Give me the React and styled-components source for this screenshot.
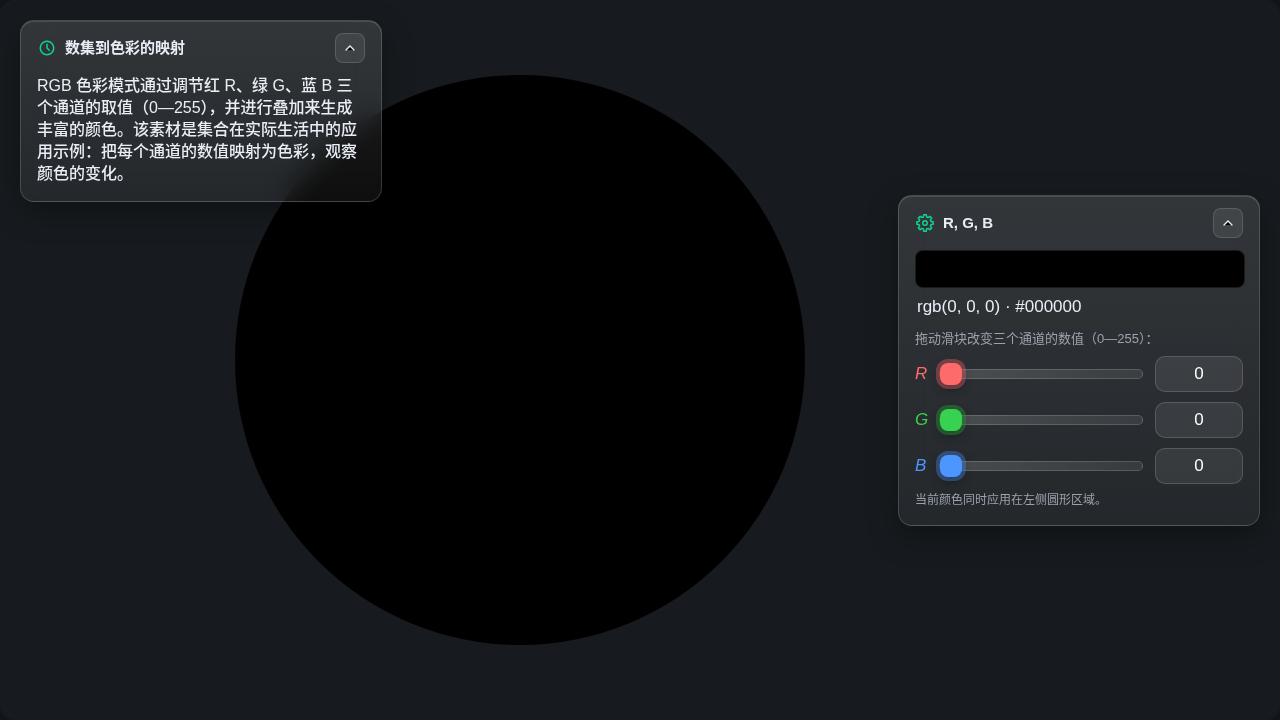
import { useState } from 'react';
import styled, { createGlobalStyle } from 'styled-components';

const channels = [
  { key: 'r', label: 'R', color: '#ff6b6b', ring: 'rgba(255, 107, 107, 0.35)' },
  { key: 'g', label: 'G', color: '#37d24f', ring: 'rgba(40, 160, 60, 0.4)' },
  { key: 'b', label: 'B', color: '#4d96ff', ring: 'rgba(77, 150, 255, 0.35)' },
];

function toHex(value) {
  return value.toString(16).padStart(2, '0').toUpperCase();
}

// outline of a cog with eight teeth in a 24x24 box
function cogPath() {
  const points = [];
  for (let i = 0; i < 8; i++) {
    [[-15, 8.3], [-9, 11], [9, 11], [15, 8.3]].forEach(([offset, radius]) => {
      const angle = ((i * 45 + offset) * Math.PI) / 180;
      const x = 12 + radius * Math.sin(angle);
      const y = 12 - radius * Math.cos(angle);
      points.push(`${x.toFixed(2)} ${y.toFixed(2)}`);
    });
  }
  return `M${points.join('L')}Z`;
}

function Collapse({ open, onClick }) {
  return (
    <IconButton type="button" aria-label="折叠" aria-expanded={open} onClick={onClick}>
      <Chevron viewBox="0 0 24 24" $open={open}>
        <path d="M6 15l6-6 6 6" />
      </Chevron>
    </IconButton>
  );
}

function App() {
  const [rgb, setRgb] = useState({ r: 0, g: 0, b: 0 });
  const [infoOpen, setInfoOpen] = useState(true);
  const [controlsOpen, setControlsOpen] = useState(true);

  const css = `rgb(${rgb.r}, ${rgb.g}, ${rgb.b})`;
  const hex = `#${toHex(rgb.r)}${toHex(rgb.g)}${toHex(rgb.b)}`;

  const change = (key) => (e) => {
    const value = Math.max(0, Math.min(255, Number(e.target.value) || 0));
    setRgb({ ...rgb, [key]: value });
  };

  return (
    <Stage>
      <GlobalStyle />
      <Canvas>
        <Disc style={{ background: css }} />
      </Canvas>

      <InfoPanel>
        <Header>
          <HeaderIcon>
            <LineIcon viewBox="0 0 24 24">
              <circle cx="12" cy="12" r="9" />
              <path d="M12 7v5l3 3" />
            </LineIcon>
          </HeaderIcon>
          <Title>数集到色彩的映射</Title>
          <Collapse open={infoOpen} onClick={() => setInfoOpen(!infoOpen)} />
        </Header>
        {infoOpen && (
          <Description>
            RGB 色彩模式通过调节红 R、绿 G、蓝 B 三个通道的取值（0—255），并进行叠加来生成丰富的颜色。该素材是集合在实际生活中的应用示例：把每个通道的数值映射为色彩，观察颜色的变化。
          </Description>
        )}
      </InfoPanel>

      <ControlPanel>
        <Header>
          <HeaderIcon>
            <LineIcon viewBox="0 0 24 24">
              <circle cx="12" cy="12" r="3" />
              <path d={cogPath()} />
            </LineIcon>
          </HeaderIcon>
          <Title>R, G, B</Title>
          <Collapse open={controlsOpen} onClick={() => setControlsOpen(!controlsOpen)} />
        </Header>
        {controlsOpen && (
          <>
            <Swatch style={{ background: css }} />
            <Readout>{css} · {hex}</Readout>
            <Hint>拖动滑块改变三个通道的数值（0—255）：</Hint>
            <Rows>
              {channels.map((c) => (
                <Row key={c.key}>
                  <ChannelLabel htmlFor={`range-${c.key}`} $color={c.color}>{c.label}</ChannelLabel>
                  <Slider
                    id={`range-${c.key}`}
                    type="range"
                    min="0"
                    max="255"
                    value={rgb[c.key]}
                    onChange={change(c.key)}
                    $color={c.color}
                    $ring={c.ring}
                  />
                  <NumberBox
                    type="number"
                    min="0"
                    max="255"
                    aria-label={c.label}
                    value={rgb[c.key]}
                    onChange={change(c.key)}
                  />
                </Row>
              ))}
            </Rows>
            <Note>当前颜色同时应用在左侧圆形区域。</Note>
          </>
        )}
      </ControlPanel>
    </Stage>
  );
}

export default App;

const GlobalStyle = createGlobalStyle`
  * {
    box-sizing: border-box;
  }
  body {
    margin: 0;
    background: #111418;
    color: #e9eef6;
    font-family: "Liberation Sans", "Noto Sans CJK SC", sans-serif;
    font-size: 16px;
    font-weight: 500;
  }
  input, button {
    font-family: inherit;
  }
`;

const Stage = styled.main`
  display: grid;
  grid-template-columns: minmax(0, 1fr);
  min-height: 100vh;
  border-radius: 14px;
  background: #171b1f;
  overflow: hidden;
`;

const Canvas = styled.div`
  grid-area: 1 / 1;
  display: flex;
  align-items: center;
  justify-content: center;
  padding-right: 240px;
`;

const Disc = styled.div`
  height: calc(100vh - 150px);
  aspect-ratio: 1;
  border-radius: 50%;
`;

const Panel = styled.section`
  grid-area: 1 / 1;
  width: 362px;
  margin: 20px;
  padding: 12px 16px 16px;
  border: 1px solid rgba(255, 255, 255, 0.16);
  border-radius: 14px;
  background: linear-gradient(180deg, rgba(255, 255, 255, 0.12), rgba(255, 255, 255, 0.06));
  backdrop-filter: blur(14px);
  box-shadow: 0 10px 30px rgba(0, 0, 0, 0.35), inset 0 1px 0 rgba(255, 255, 255, 0.12);
`;

const InfoPanel = styled(Panel)`
  place-self: start;
`;

const ControlPanel = styled(Panel)`
  place-self: center end;
`;

const Header = styled.header`
  display: flex;
  align-items: center;
  gap: 8px;
  height: 30px;
  margin-bottom: 12px;
`;

const HeaderIcon = styled.span`
  display: flex;
  align-items: center;
  justify-content: center;
  width: 20px;
  height: 20px;
  color: #10d48e;
`;

const LineIcon = styled.svg`
  width: 18px;
  height: 18px;
  fill: none;
  stroke: currentColor;
  stroke-width: 2;
  stroke-linecap: round;
  stroke-linejoin: round;
`;

const Title = styled.h1`
  flex: 1;
  margin: 0;
  font-size: 15px;
  font-weight: 700;
  line-height: 22px;
`;

const IconButton = styled.button`
  display: flex;
  align-items: center;
  justify-content: center;
  width: 30px;
  height: 30px;
  padding: 0;
  border: 1px solid rgba(255, 255, 255, 0.14);
  border-radius: 8px;
  background: rgba(255, 255, 255, 0.08);
  color: #e9eef6;
  cursor: pointer;
`;

const Chevron = styled.svg`
  width: 16px;
  height: 16px;
  fill: #000;
  stroke: currentColor;
  stroke-width: 2;
  stroke-linecap: round;
  transform: rotate(${(p) => (p.$open ? 0 : 180)}deg);
`;

const Description = styled.p`
  margin: 0;
  line-height: 22px;
`;

const Swatch = styled.div`
  box-sizing: content-box;
  width: 100%;
  height: 36px;
  border: 1px solid rgba(255, 255, 255, 0.1);
  border-radius: 8px;
`;

const Readout = styled.p`
  margin: 8px 2px 12px;
  font-size: 17px;
  line-height: 22px;
`;

const Hint = styled.p`
  margin: 0 0 8px;
  color: #9ba3ad;
  font-size: 13px;
  font-weight: 400;
  line-height: 18px;
`;

const Rows = styled.div`
  display: grid;
  gap: 10px;
`;

const Row = styled.div`
  display: flex;
  align-items: center;
  gap: 12px;
`;

const ChannelLabel = styled.label`
  width: 12px;
  color: ${(p) => p.$color};
  font-size: 17px;
  font-style: italic;
`;

const Slider = styled.input`
  flex: 1;
  min-width: 0;
  height: 22px;
  margin: 0;
  appearance: none;
  background: transparent;
  cursor: pointer;

  &::-webkit-slider-runnable-track {
    height: 10px;
    border: 1px solid rgba(255, 255, 255, 0.16);
    border-radius: 5px;
    background: linear-gradient(90deg, rgba(255, 255, 255, 0.16), rgba(255, 255, 255, 0.08));
  }

  &::-webkit-slider-thumb {
    appearance: none;
    width: 22px;
    height: 22px;
    margin-top: -7px;
    border-radius: 8px;
    background: ${(p) => p.$color};
    box-shadow: 0 0 0 4px ${(p) => p.$ring}, 0 4px 12px rgba(0, 0, 0, 0.4);
  }
`;

const NumberBox = styled.input`
  width: 88px;
  height: 36px;
  padding: 0 10px;
  border: 1px solid rgba(255, 255, 255, 0.16);
  border-radius: 10px;
  background: rgba(255, 255, 255, 0.08);
  color: #ffffff;
  font-size: 17px;
  text-align: center;
  appearance: textfield;

  &::-webkit-inner-spin-button {
    appearance: none;
    margin: 0;
  }
`;

const Note = styled.p`
  margin: 8px 0 0;
  color: #9ba3ad;
  font-size: 12px;
  font-weight: 400;
  line-height: 17px;
`;
